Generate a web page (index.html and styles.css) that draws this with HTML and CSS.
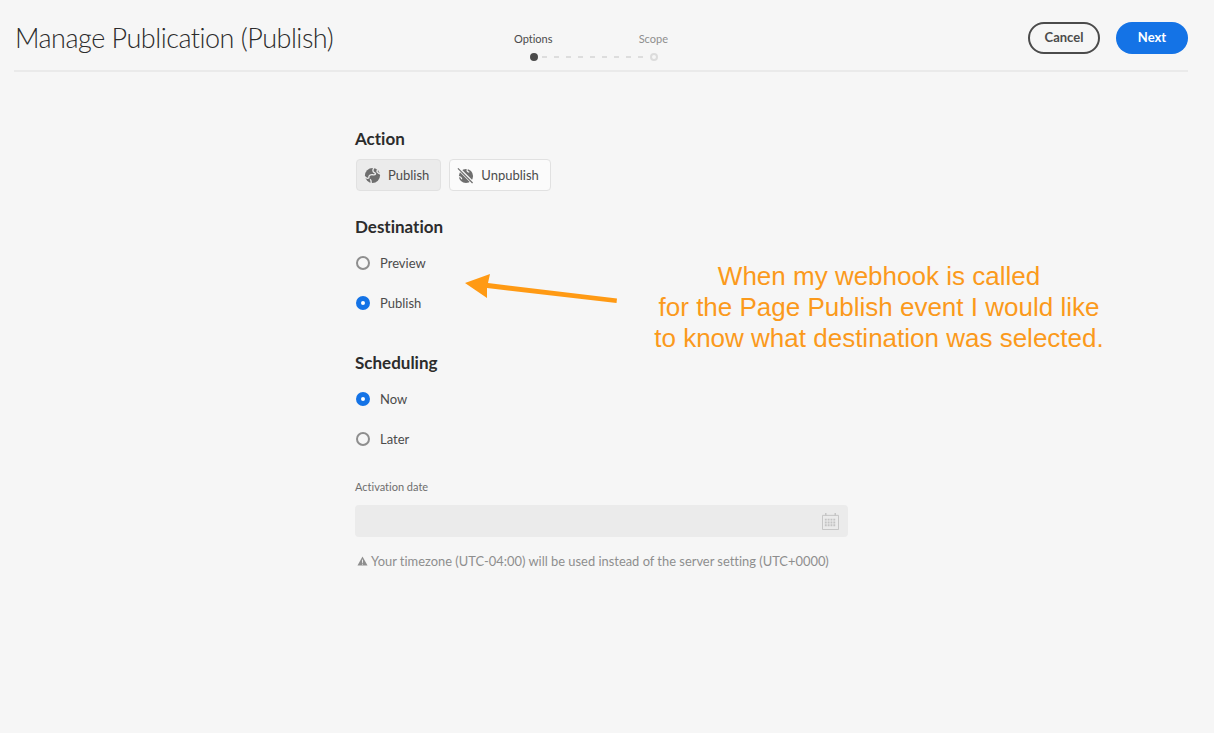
FILE: index.html
```html
<!DOCTYPE html>
<html lang="en">
<head>
    <meta charset="UTF-8">
    <meta name="viewport" content="width=device-width, initial-scale=1.0">
    <title>Manage Publication (Publish)</title>
    <link rel="stylesheet" href="styles.css">
</head>
<body>

    <header class="header">
        <h1 class="title">Manage Publication (Publish)</h1>

        <div class="stepper">
            <div class="step-labels">
                <span class="step-label active">Options</span>
                <span class="step-label">Scope</span>
            </div>
            <div class="step-track">
                <span class="step-dot active"></span>
                <span class="step-dashes"></span>
                <span class="step-dot"></span>
            </div>
        </div>

        <div class="actions">
            <button class="btn cancel-btn">Cancel</button>
            <button class="btn next-btn">Next</button>
        </div>
    </header>

    <main class="form">
        <h2 class="section-title first">Action</h2>
        <div class="toggle-group">
            <button class="toggle selected">
                <svg class="toggle-icon" viewBox="0 0 18 18">
                    <circle cx="9" cy="9" r="8" fill="#6e6e6e"/>
                    <path fill="none" stroke="#ebebeb" stroke-width="1.400" d="M10.500 .5C9 3 9 5 11 6c2 1 1.500 2.500-1.500 2.200C6.500 7.800 5 9 5.200 10.800 5.400 12.500 3 12.500 .5 10M14.500 3c-1.500 1.500-.5 3.500 3 4.500M6.500 13c1 1 1.500 2 1 5"/>
                </svg>
                <span>Publish</span>
            </button>
            <button class="toggle">
                <svg class="toggle-icon" viewBox="0 0 18 18">
                    <circle cx="9.500" cy="9.500" r="7.500" fill="#6e6e6e"/>
                    <path stroke="#fbfbfb" stroke-width="3.400" d="M1 1l16 16"/>
                    <path stroke="#6e6e6e" stroke-width="1.300" d="M1 1.500l15.500 15.500"/>
                    <path fill="none" stroke="#fbfbfb" stroke-width="1.200" d="M11 2c-1 2 0 3 2 3.500M2 10c2 .5 3 1.500 3 3"/>
                </svg>
                <span>Unpublish</span>
            </button>
        </div>

        <h2 class="section-title">Destination</h2>
        <div class="radio-group">
            <label class="radio"><span class="radio-mark"></span>Preview</label>
            <label class="radio"><span class="radio-mark checked"></span>Publish</label>
        </div>

        <h2 class="section-title">Scheduling</h2>
        <div class="radio-group last">
            <label class="radio"><span class="radio-mark checked"></span>Now</label>
            <label class="radio"><span class="radio-mark"></span>Later</label>
        </div>

        <label class="field-label">Activation date</label>
        <div class="date-input">
            <svg class="calendar" viewBox="0 0 18 18">
                <path fill="none" stroke="#c4c4c4" d="M.5 2.500h17v15H.5z"/>
                <path stroke="#c4c4c4" stroke-width="1.500" d="M4 0v3M14 0v3"/>
                <path stroke="#c4c4c4" stroke-width="2" stroke-dasharray="2 1" d="M3 7h12M3 10h12M3 13h12"/>
            </svg>
        </div>
        <p class="hint">
            <svg class="hint-icon" viewBox="0 0 12 11">
                <path fill="#8e8e8e" d="M6 .5l5.500 10H.5z"/>
                <path stroke="#f6f6f6" d="M6 4v3.500M6 8.500v1"/>
            </svg>
            Your timezone (UTC-04:00) will be used instead of the server setting (UTC+0000)
        </p>
    </main>

    <!-- annotation drawn on top of the screenshot -->
    <svg class="arrow" viewBox="0 0 160 32">
        <path fill="#ff9a14" d="M1 10L26 1 24 10 153 25.500 152.500 30 23 15 23 25z"/>
    </svg>
    <p class="note">When my webhook is called<br>for the Page Publish event I would like<br>to know what destination was selected.</p>

</body>
</html>
```

FILE: styles.css
```css
body {
    font-family: 'Lato', 'Open Sans', sans-serif;
    font-variant-ligatures: none;
    background: #f6f6f6;
    color: #4b4b4b;
    margin: 0;
    padding: 0;
    height: 733px;
    overflow: hidden;
}
.header {
    display: flex;
    align-items: flex-start;
    height: 70px;
    margin: 0 26px 0 14px;
    border-bottom: 2px solid #eaeaea;
}
.title {
    flex: 0 0 500px;
    margin: 20px 0 0 1px;
    font-size: 27px;
    line-height: 36px;
    font-weight: 300;
    letter-spacing: -0.5px;
    color: #2c2c2c;
    white-space: nowrap;
}
.stepper {
    width: 154px;
    margin-top: 31px;
    margin-left: -1px;
}
.step-labels {
    display: flex;
    justify-content: space-between;
    height: 16px;
}
.step-label {
    font-size: 11px;
    line-height: 16px;
    color: #8e8e8e;
}
.step-label.active {
    color: #4b4b4b;
}
.step-track {
    display: flex;
    align-items: center;
    width: 128px;
    margin: 6px 0 0 16px;
}
.step-dot {
    flex: none;
    box-sizing: border-box;
    width: 8px;
    height: 8px;
    border: 2px solid #dcdcdc;
    border-radius: 50%;
}
.step-dot.active {
    background: #4b4b4b;
    border-color: #4b4b4b;
}
.step-dashes {
    flex: 1;
    height: 2px;
    margin: 0 3px 0 4px;
    background: repeating-linear-gradient(90deg, #dddddd 0, #dddddd 5px, transparent 5px, transparent 12px);
}
.actions {
    display: flex;
    gap: 16px;
    margin-left: auto;
    margin-top: 22px;
}
.btn {
    box-sizing: border-box;
    width: 72px;
    height: 32px;
    padding: 0 0 2px;
    border-radius: 16px;
    font-family: inherit;
    font-size: 13px;
    font-weight: 700;
    cursor: pointer;
}
.cancel-btn {
    background: transparent;
    border: 2px solid #4b4b4b;
    color: #4b4b4b;
}
.next-btn {
    background: #1473e6;
    border: none;
    color: white;
}
.form {
    width: 493px;
    margin-left: 355px;
}
.section-title {
    margin: 0;
    font-size: 17px;
    line-height: 22px;
    font-weight: 700;
    color: #2c2c2c;
}
.section-title.first {
    margin-top: 56px;
}
.toggle-group {
    display: flex;
    gap: 8px;
    margin: 9px 0 25px;
}
.toggle {
    display: flex;
    align-items: center;
    gap: 7px;
    box-sizing: border-box;
    height: 32px;
    padding: 0 11px 0 7px;
    margin: 0;
    background: #fbfbfb;
    border: 1px solid #e1e1e1;
    border-radius: 4px;
    font-family: inherit;
    font-size: 13px;
    color: #4b4b4b;
}
.toggle.selected {
    background: #ebebeb;
    margin-left: 1px;
}
.toggle-icon {
    width: 17px;
    height: 17px;
    flex: none;
}
.radio-group {
    display: flex;
    flex-direction: column;
    margin: 5px 0 29px;
}
.radio-group.last {
    margin-bottom: 20px;
}
.radio {
    display: flex;
    align-items: center;
    gap: 10px;
    height: 40px;
    font-size: 13px;
    color: #4b4b4b;
}
.radio-mark {
    box-sizing: border-box;
    width: 14px;
    height: 14px;
    margin-left: 1px;
    border: 2px solid #8e8e8e;
    border-radius: 50%;
}
.radio-mark.checked {
    border: 5px solid #1473e6;
    background: white;
}
.field-label {
    display: block;
    font-size: 11px;
    line-height: 16px;
    color: #6e6e6e;
}
.date-input {
    display: flex;
    align-items: center;
    justify-content: flex-end;
    box-sizing: border-box;
    height: 32px;
    margin-top: 10px;
    padding-right: 9px;
    background: #ebebeb;
    border-radius: 4px;
}
.calendar {
    width: 17px;
    height: 17px;
}
.hint {
    display: flex;
    align-items: center;
    gap: 3px;
    margin: 15px 0 0 2px;
    font-size: 12.900px;
    line-height: 18px;
    color: #8e8e8e;
    white-space: nowrap;
}
.hint-icon {
    width: 11px;
    height: 10px;
}
.arrow {
    position: absolute;
    left: 464px;
    top: 273px;
    width: 160px;
    height: 32px;
}
.note {
    position: absolute;
    left: 629px;
    top: 261px;
    width: 500px;
    margin: 0;
    font-family: 'Liberation Sans', sans-serif;
    font-size: 26px;
    line-height: 31px;
    text-align: center;
    color: #fb9a1c;
}
```
